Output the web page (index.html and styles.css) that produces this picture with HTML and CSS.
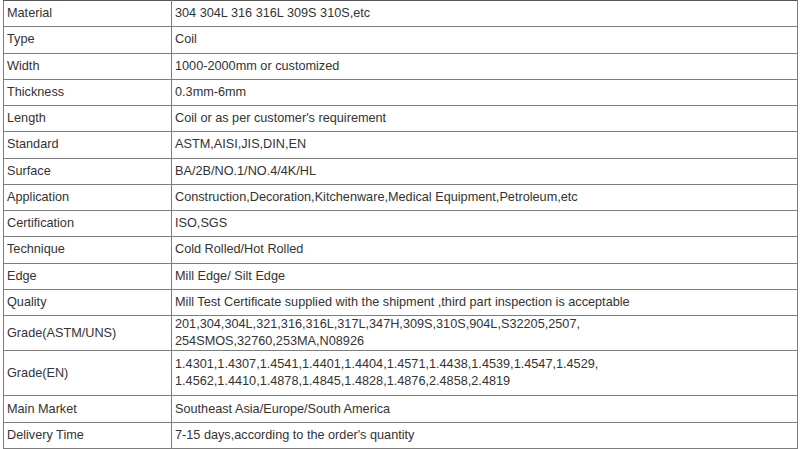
FILE: index.html
```html
<!DOCTYPE html>
<html>
<head>
<meta charset="utf-8">
<link rel="stylesheet" href="styles.css">
</head>
<body>
<table class="spec">
<tr><td class="k">Material</td><td class="v">304 304L 316 316L 309S 310S,etc</td></tr>
<tr><td class="k">Type</td><td class="v">Coil</td></tr>
<tr><td class="k">Width</td><td class="v">1000-2000mm or customized</td></tr>
<tr><td class="k">Thickness</td><td class="v">0.3mm-6mm</td></tr>
<tr><td class="k">Length</td><td class="v">Coil or as per customer's requirement</td></tr>
<tr><td class="k">Standard</td><td class="v">ASTM,AISI,JIS,DIN,EN</td></tr>
<tr><td class="k">Surface</td><td class="v">BA/2B/NO.1/NO.4/4K/HL</td></tr>
<tr><td class="k">Application</td><td class="v">Construction,Decoration,Kitchenware,Medical Equipment,Petroleum,etc</td></tr>
<tr><td class="k">Certification</td><td class="v">ISO,SGS</td></tr>
<tr><td class="k">Technique</td><td class="v">Cold Rolled/Hot Rolled</td></tr>
<tr><td class="k">Edge</td><td class="v">Mill Edge/ Silt Edge</td></tr>
<tr><td class="k">Quality</td><td class="v">Mill Test Certificate supplied with the shipment ,third part inspection is acceptable</td></tr>
<tr class="two"><td class="k">Grade(ASTM/UNS)</td><td class="v">201,304,304L,321,316,316L,317L,347H,309S,310S,904L,S32205,2507,<br>254SMOS,32760,253MA,N08926</td></tr>
<tr class="tall"><td class="k">Grade(EN)</td><td class="v">1.4301,1.4307,1.4541,1.4401,1.4404,1.4571,1.4438,1.4539,1.4547,1.4529,<br>1.4562,1.4410,1.4878,1.4845,1.4828,1.4876,2.4858,2.4819</td></tr>
<tr class="mm"><td class="k">Main Market</td><td class="v">Southeast Asia/Europe/South America</td></tr>
<tr><td class="k">Delivery Time</td><td class="v">7-15 days,according to the order's quantity</td></tr>
</table>
</body>
</html>
```
FILE: styles.css
```css
html, body {
  margin: 0;
  padding: 0;
  background: #ffffff;
}
body {
  padding: 0 2px 0 3px;
  font-family: "Liberation Sans", Arial, sans-serif;
  font-size: 12.7px;
  color: #333333;
}
.spec {
  width: 795px;
  border-collapse: collapse;
  table-layout: fixed;
}
.spec td {
  border: 1px solid #7d7d7d;
  height: 26.25px;
  padding: 0 3px;
  line-height: 17px;
  vertical-align: middle;
  box-sizing: border-box;
}
.spec tr:first-child td {
  border-top-color: #555555;
}
.spec .k {
  width: 168px;
}
.spec .two td {
  height: 34px;
}
.spec .tall td {
  height: 45px;
}
.spec .mm td {
  height: 27px;
}
```
